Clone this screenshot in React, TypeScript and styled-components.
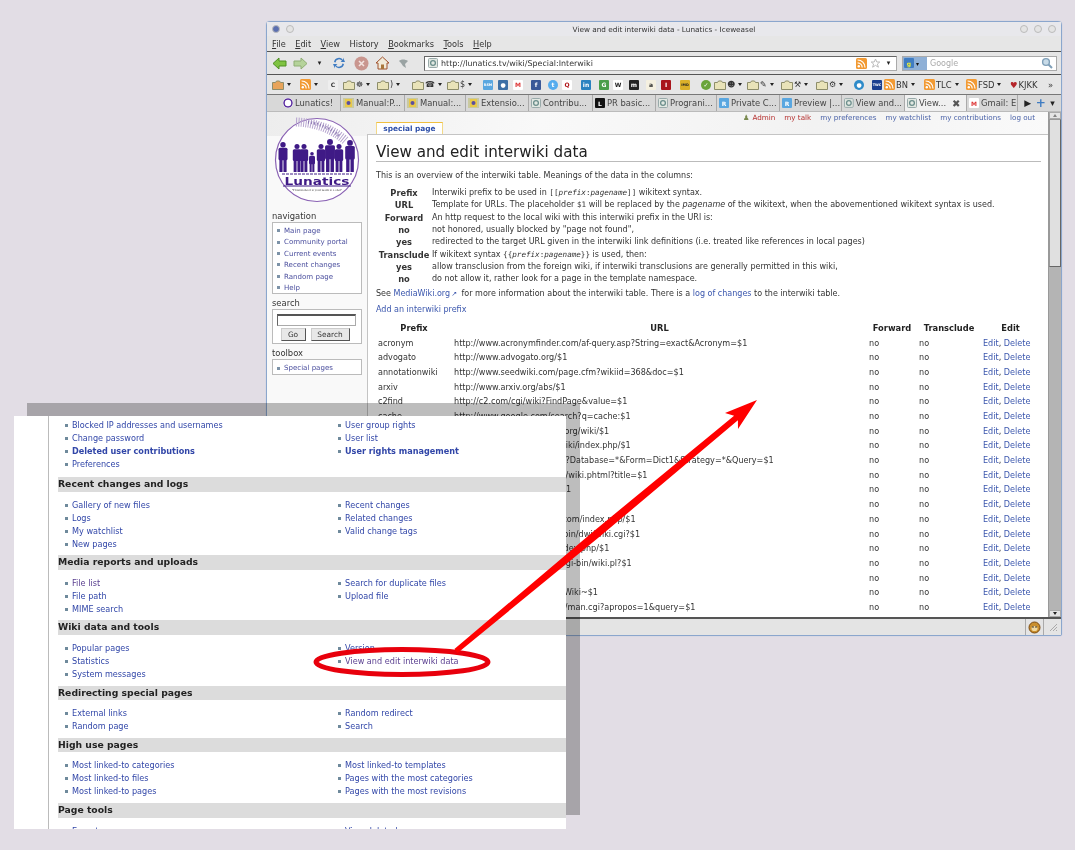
import React from "react";
import styled, { createGlobalStyle } from "styled-components";

const Global = createGlobalStyle`
  html, body { margin: 0; padding: 0; background: #e2dde5; }
  body { font-family: "DejaVu Sans", sans-serif; color: #222; }
`;

const Desktop = styled.div`
  position: relative; width: 1075px; height: 850px; overflow: hidden;
  background: #e2dde5; filter: blur(0.35px);
`;

/* ---------- browser window ---------- */
const Window = styled.div`
  position: absolute; left: 266px; top: 21px; width: 796px; height: 615px;
  box-sizing: border-box; display: flex; flex-direction: column;
  border: 1px solid #8ba6cd; border-radius: 4px 4px 2px 2px; background: #e6e6e6;
  box-shadow: 0 0 1px #9db3d3;
`;
const TitleBar = styled.div`
  height: 14px; flex: none; display: flex; align-items: center; justify-content: space-between; padding: 0 5px;
  font-size: 7.3px; color: #333; background: #e8e8ec;
`;
const TitleDots = styled.div<{ $end?: boolean }>`
  display: flex; gap: 6px; align-items: center; width: 50px; justify-content: ${p => p.$end ? "flex-end" : "flex-start"};
`;
const Dot = styled.span<{ $c?: string }>`
  width: 8px; height: 8px; border-radius: 50%; border: 1px solid #bbb; background: ${p => p.$c || "#e4e4e4"}; box-sizing: border-box;
`;
const MenuBar = styled.div`
  height: 16px; flex: none; display: flex; gap: 9.5px; align-items: center; padding: 0 5px;
  font-size: 8.2px; color: #333; background: #e6e6e6; border-bottom: 1px solid #555; box-sizing: border-box;
  u { text-decoration-thickness: 1px; text-underline-offset: 1px; }
`;
const NavBar = styled.div`
  height: 23px; flex: none; display: flex; align-items: center; padding: 0 3px 0 2px;
  background: #e6e6e6; border-bottom: 1px solid #555; box-sizing: border-box;
`;
const NavSlot = styled.span<{ $w: number }>`
  width: ${p => p.$w}px; flex: none; display: flex; justify-content: center; align-items: center; font-size: 7px; color: #222;
`;
const UrlBox = styled.div`
  flex: none; width: 473px; height: 15px; box-sizing: border-box; margin-left: 9px; display: flex; align-items: center; gap: 3px; padding: 0 3px;
  background: #fff; border: 1px solid #aaa; border-top-color: #666; border-left-color: #666; font-size: 7.95px; color: #333;
`;
const UrlText = styled.span`flex: 1; white-space: nowrap;`;
const SearchBox = styled.div`
  flex: none; width: 155px; height: 15px; box-sizing: border-box; margin-left: 5px; display: flex; align-items: center; padding-right: 3px;
  background: #fff; border: 1px solid #aaa; font-size: 8px; color: #aaa;
`;
const EngineButton = styled.span`
  width: 24px; height: 13px; background: #8fb0d6; display: flex; align-items: center; gap: 2px; padding-left: 1px; box-sizing: border-box; margin-right: 3px; font-size: 6px; color: #111;
`;
const BookmarkBar = styled.div`
  height: 20px; flex: none; display: flex; align-items: center; padding-left: 5px;
  background: #e6e6e6; border-bottom: 1px solid #777; box-sizing: border-box; font-size: 8.4px; color: #333;
`;
const BookmarkSlot = styled.span<{ $w: number }>`
  width: ${p => p.$w}px; flex: none; display: flex; align-items: center; gap: 1px; white-space: nowrap;
`;
const Caret = styled.span<{ $up?: boolean; $flat?: boolean }>`
  width: 0; height: 0; margin-left: ${p => p.$flat ? 0 : 2}px; border-left: 2.5px solid transparent; border-right: 2.5px solid transparent; border-top: 3px solid #222;
  ${p => p.$up ? "transform: rotate(180deg); opacity: .5;" : ""}
`;
const Fav = styled.span<{ $bg: string; $fg?: string; $round?: boolean; $tiny?: boolean }>`
  width: 10px; height: 10px; flex: none; display: inline-flex; align-items: center; justify-content: center; overflow: hidden;
  background: ${p => p.$bg}; color: ${p => p.$fg || "#fff"}; font-size: ${p => p.$tiny ? 3.4 : 6}px; font-weight: bold; border-radius: ${p => p.$round ? "50%" : "1px"};
`;
const FolderGlyph = styled.span`font-size: 8px;`;
const Heart = styled.span`color: #b5252b;`;
const TabBar = styled.div`
  height: 16px; flex: none; display: flex; align-items: stretch; padding-left: 14px; box-sizing: border-box;
  background: #d8d8d8; font-size: 8.4px; color: #444; position: relative;
`;
const Tab = styled.div<{ $active?: boolean; $w: number }>`
  width: ${p => p.$w}px; flex: none; box-sizing: border-box; display: flex; align-items: center; gap: 2px; padding: 0 2px; overflow: hidden; white-space: nowrap;
  border-right: 1px solid #aaa; background: ${p => p.$active ? "#f0f0f0" : "#d8d8d8"};
`;
const TabClose = styled.span`margin-left: 4px; color: #555; font-weight: bold; font-size: 10px;`;
const TabTail = styled.div`
  flex: 1; display: flex; align-items: center; justify-content: space-around; padding: 0 4px; font-size: 9px; color: #222;
`;
const TabPlus = styled.span`color: #3f7cc2; font-weight: bold; font-size: 12px;`;

/* ---------- page ---------- */
const Viewport = styled.div`flex: 1; min-height: 0; display: flex; border-top: 1px solid #bbb;`;
const Page = styled.div`
  flex: 1; min-width: 0; display: flex; overflow: hidden;
  background: linear-gradient(100deg, #ededed 0%, #f9f9f9 35%, #f2f2f2 70%, #fafafa 100%) top / 100% 24px no-repeat, #f9f9f9;
`;
const Sidebar = styled.div`
  width: 100px; flex: none; box-sizing: border-box; padding: 5px 5px 0 5px; font-size: 8px; color: #333;
`;
const LogoWrap = styled.div`height: 86px; display: flex; justify-content: center; margin-bottom: 8px;`;
const PortalTitle = styled.div`font-size: 8.4px; height: 11px; line-height: 11px; color: #333;`;
const PortalBox = styled.div`
  box-sizing: border-box; background: #fff; border: 1px solid #bbb; margin-bottom: 4px; padding: 2px 0 0 4px;
  font-size: 7.05px;
`;
const PortalItem = styled.div`
  height: 11.4px; line-height: 11.4px; color: #4b4f9e; display: flex; align-items: center; gap: 3px;
  &::before { content: ""; width: 3px; height: 3px; background: #7d93a8; flex: none; margin-right: 1px; }
`;
const SearchInput = styled.div`
  height: 12px; margin: 2px 5px 0 0; border: 1px solid #aaa; border-top: 2px solid #555; border-left-color: #666; background: #fff; box-sizing: border-box;
`;
const SearchButtons = styled.div`display: flex; gap: 5px; justify-content: center; margin-top: 2px; padding: 0 8px 2px 0;`;
const SearchBtn = styled.div<{ $w: number }>`
  width: ${p => p.$w}px; height: 13px; box-sizing: border-box; background: #e8e8e8; border: 1px solid #ccc; border-right-color: #555; border-bottom-color: #555;
  font-size: 7.4px; text-align: center; line-height: 11px; color: #333;
`;
const Main = styled.div`flex: 1; min-width: 0; display: flex; flex-direction: column;`;
const PersonalBar = styled.div`
  height: 10px; flex: none; display: flex; justify-content: flex-end; align-items: center; gap: 9px; padding-right: 13px; font-size: 7.2px; color: #4b63a8;
`;
const PersonalItem = styled.span<{ $red?: boolean }>`color: ${p => p.$red ? "#b5302f" : "#4a62a8"}; white-space: nowrap; display: flex; gap: 3px; align-items: center;`;
const UserGlyph = styled.span`color: #7a8a50;`;
const TabRow = styled.div`height: 12px; flex: none; padding-left: 9px; position: relative; z-index: 1;`;
const PageTab = styled.div`
  width: 67px; height: 12px; box-sizing: border-box; background: #fff; border: 1px solid #f3d987; border-bottom: none; border-top-color: #f0c040;
  font-size: 7.4px; font-weight: bold; color: #2b4da8; text-align: center; line-height: 11px;
`;
const Content = styled.div`
  flex: 1; min-height: 0; background: #fff; border: 1px solid #c4c4c4; border-width: 1px 0 0 1px; padding: 0 7px 0 8px; overflow: hidden;
  font-size: 8.02px; color: #333;
`;
const Heading = styled.h1`
  margin: 8px 0 0; height: 18px; font-size: 15.15px; font-weight: normal; line-height: 18px; color: #222; border-bottom: 1px solid #bbb; white-space: nowrap;
`;
const Intro = styled.p`margin: 8px 0 5px; height: 12px; line-height: 12px; white-space: nowrap;`;
const LegendTable = styled.div`display: grid; grid-template-columns: 56px 1fr; grid-auto-rows: 12.35px; line-height: 12.35px; white-space: nowrap;`;
const LegendKey = styled.b`text-align: center; font-weight: bold; color: #333; font-size: 8.3px;`;
const LegendText = styled.span``;
const Mono = styled.code`font-family: "DejaVu Sans Mono", monospace; font-size: 7.6px;`;
const Note = styled.p<{ $top: number }>`margin: ${p => p.$top}px 0 0; height: 12px; line-height: 12px; white-space: nowrap;`;
const Lnk = styled.a`color: #3a56ad;`;
const Ext = styled.span`color: #3a56ad; font-size: 7px; margin: 0 2px 0 1px;`;
const DataTable = styled.table`
  table-layout: fixed; width: 664px; border-collapse: collapse; margin-top: 4.5px; font-size: 8.1px;
  th { font-weight: bold; height: 15px; padding: 0; text-align: center; color: #222; font-size: 8.3px; }
  td { height: 14.7px; padding: 0 0 0 2px; white-space: nowrap; overflow: hidden; color: #333; box-sizing: border-box; }
`;
const Scrollbar = styled.div`
  width: 13px; flex: none; display: flex; flex-direction: column; background: #b4b4b4; border-left: 1px solid #999; box-sizing: border-box;
`;
const ScrollBtn = styled.div`height: 7px; flex: none; background: #e4e4e4; border: 1px solid #aaa; box-sizing: border-box; display: flex; align-items: center; justify-content: center;`;
const ScrollThumb = styled.div`height: 148px; flex: none; background: #e0e0e0; border: 1px solid #999; border-right-color: #666; border-bottom-color: #666; box-sizing: border-box;`;
const ScrollRest = styled.div`flex: 1;`;
const StatusBar = styled.div`
  height: 18px; flex: none; background: #e4e4e4; border-top: 2px solid #555; box-sizing: border-box; display: flex; justify-content: flex-end; align-items: center;
`;
const StatusCell = styled.div`width: 17px; height: 100%; border-left: 1px solid #aaa; display: flex; align-items: center; justify-content: center;`;

/* ---------- overlay panel ---------- */
const PanelShadow = styled.div`
  position: absolute; left: 27px; top: 403px; width: 553px; height: 412px; background: rgba(0,0,0,.26);
`;
const Panel = styled.div`
  position: absolute; left: 14px; top: 416px; width: 552px; height: 413px; background: #fff; overflow: hidden; padding-left: 34px; box-sizing: border-box;
`;
const PanelInner = styled.div`
  display: flow-root; height: 100%; border-left: 1px solid #bbb; padding-left: 9px;
`;
const PanelFlow = styled.div`margin-top: -17.5px;`;
const SectionBar = styled.h4`
  margin: 0; height: 14.6px; line-height: 14px; background: #dcdcdc; font-size: 9.25px; font-weight: 700; color: #222; white-space: nowrap;
`;
const Columns = styled.div<{ $first?: boolean }>`
  display: grid; grid-template-columns: 273px 1fr; padding: 7px 0 ${p => p.$first ? 6.6 : 4.6}px 14px; font-size: 8.14px;
`;
const Col = styled.div`display: flex; flex-direction: column;`;
const Item = styled.div<{ $bold?: boolean; $visited?: boolean }>`
  height: 13px; line-height: 13px; white-space: nowrap; position: relative; color: ${p => p.$visited ? "#5a3f90" : "#3146a8"}; font-weight: ${p => p.$bold ? "bold" : "normal"};
  &::before { content: ""; position: absolute; left: -7px; top: 5px; width: 3px; height: 3px; background: #6f8a9c; }
`;
const Annotation = styled.svg`position: absolute; left: 0; top: 0; pointer-events: none;`;

/* ---------- drawings ---------- */
const Folder = ({ c = "#e9e3b8" }: { c?: string }) => (
  <svg width="12" height="10" viewBox="0 0 12 10"><path d="M.5 2.5h3l1-1.5h3l1 1.5h3v7H.5z" fill={c} stroke="#8d8d6a" /></svg>
);
const Rss = () => (
  <svg width="11" height="11" viewBox="0 0 11 11"><rect width="11" height="11" rx="1.5" fill="#f29a33" /><circle cx="2.8" cy="8.2" r="1.2" fill="#fff" /><path d="M1.6 4.8a4.6 4.6 0 0 1 4.6 4.6M1.6 2a7.4 7.4 0 0 1 7.4 7.4" fill="none" stroke="#fff" strokeWidth="1.2" /></svg>
);
const Gear = () => (
  <svg width="10" height="10" viewBox="0 0 10 10"><rect x=".5" y=".5" width="9" height="9" rx="1" fill="#e2e8e2" stroke="#9aa" /><circle cx="5" cy="5" r="2.4" fill="none" stroke="#6c8e8c" strokeWidth="1.3" /></svg>
);
const MwFav = () => (
  <svg width="11" height="10" viewBox="0 0 11 10"><rect width="11" height="10" fill="#c9c9a0" /><rect x="2" y="1" width="7" height="8" fill="#e9c94a" /><circle cx="5.5" cy="5" r="2" fill="#5b4fa0" /></svg>
);
const NavArrow = ({ c, s, flip }: { c: string; s: string; flip?: boolean }) => (
  <svg width="15" height="13" viewBox="0 0 15 13"><path d={flip ? "M14 6.5 8 1v3H1v5h7v3z" : "M1 6.5 7 1v3h7v5H7v3z"} fill={c} stroke={s} /></svg>
);

const people: [number, number][] = [[9, 25], [23, 27], [30, 27], [38, 35], [47, 27], [56, 22], [65, 27], [76, 23]];
const Logo = () => (
  <svg width="86" height="86" viewBox="0 0 86 86">
    <circle cx="43" cy="43" r="41.5" fill="#fff" stroke="#8a62b4" strokeWidth="1.2" />
    <path d="M22 5Q52 6 72 24" stroke="#b6a4cf" strokeWidth="9" fill="none" strokeDasharray="1 1.4" />
    <path d="M34 5Q56 9 66 20" stroke="#8d79b3" strokeWidth="3" fill="none" strokeDasharray="1 2" />
    <g fill="#3f1a86">
      {people.map(([x, top], i) => {
        const h = 55 - top;
        const w = h * 0.15;
        return (
          <g key={i}>
            <circle cx={x} cy={top + h * 0.09} r={h * 0.09} />
            <rect x={x - w} y={top + h * 0.19} width={w * 2} height={h * 0.42} rx={1.5} />
            <rect x={x - w * 0.8} y={top + h * 0.55} width={w * 0.7} height={h * 0.45} />
            <rect x={x + w * 0.1} y={top + h * 0.55} width={w * 0.7} height={h * 0.45} />
          </g>
        );
      })}
    </g>
    <path d="M8 57H78" stroke="#3f1a86" strokeWidth="1" strokeDasharray="3 1" />
    <text x="43" y="68" textAnchor="middle" fontFamily="DejaVu Sans" fontWeight="bold" fontSize="11" fill="#3f1a86" textLength="65" lengthAdjust="spacingAndGlyphs">Lunatics</text>
    <path d="M9 69H77" stroke="#3f1a86" strokeWidth="1.2" />
    <text x="43" y="73.5" textAnchor="middle" fontFamily="DejaVu Serif" fontSize="2.7" fill="#444">"Troubleshoot is your mark is a shot"</text>
  </svg>
);

/* ---------- data ---------- */
const menus: [string, string][] = [["F", "ile"], ["E", "dit"], ["V", "iew"], ["", "History"], ["B", "ookmarks"], ["T", "ools"], ["H", "elp"]];
const tabs: { t: string; i: "moon" | "mw" | "gear" | "l" | "rsm" | "m"; w: number; active?: boolean }[] = [
  { t: "Lunatics!", i: "moon", w: 60 }, { t: "Manual:P...", i: "mw", w: 64 }, { t: "Manual:...", i: "mw", w: 61 },
  { t: "Extensio...", i: "mw", w: 63 }, { t: "Contribu...", i: "gear", w: 64 }, { t: "PR basic...", i: "l", w: 63 },
  { t: "Prograni...", i: "gear", w: 61 }, { t: "Private C...", i: "rsm", w: 63 }, { t: "Preview |...", i: "rsm", w: 62 },
  { t: "View and...", i: "gear", w: 63 }, { t: "View...", i: "gear", w: 62, active: true }, { t: "Gmail: E", i: "m", w: 51 },
];
type Bm = { w: number; k: string; g?: string; label?: string; bg?: string; fg?: string; round?: boolean; caret?: boolean; tiny?: boolean };
const bookmarks: Bm[] = [
  { w: 28, k: "folder", caret: true, g: "", bg: "#e8a45a" }, { w: 28, k: "rss", caret: true }, { w: 15, k: "fav", label: "C", bg: "#eee", fg: "#333" },
  { w: 34, k: "folder", g: "☸", caret: true }, { w: 35, k: "folder", g: ")", caret: true }, { w: 35, k: "folder", g: "☎", caret: true }, { w: 36, k: "folder", g: "$", caret: true },
  { w: 15, k: "fav", label: "RSM", bg: "#5aa7e0", tiny: true }, { w: 15, k: "fav", label: "●", bg: "#3c6fa5" }, { w: 18, k: "fav", label: "M", bg: "#fff", fg: "#d33" },
  { w: 17, k: "fav", label: "f", bg: "#3b5998" }, { w: 14, k: "fav", label: "t", bg: "#55acee", round: true }, { w: 19, k: "fav", label: "Q", bg: "#fff", fg: "#b01116" },
  { w: 18, k: "fav", label: "in", bg: "#2a82c0" }, { w: 14, k: "fav", label: "G", bg: "#4a9e4a" }, { w: 16, k: "fav", label: "W", bg: "#fff", fg: "#222" },
  { w: 17, k: "fav", label: "m", bg: "#222" }, { w: 15, k: "fav", label: "a", bg: "#f5f0e0", fg: "#222" }, { w: 19, k: "fav", label: "I", bg: "#a9161b" },
  { w: 21, k: "fav", label: "IMD", bg: "#dbb02a", fg: "#222", tiny: true }, { w: 13, k: "fav", label: "✓", bg: "#6aa53a", round: true },
  { w: 33, k: "folder", g: "☻", caret: true }, { w: 34, k: "folder", g: "✎", caret: true }, { w: 35, k: "folder", g: "⚒", caret: true }, { w: 38, k: "folder", g: "⚙", caret: true },
  { w: 18, k: "fav", label: "●", bg: "#2e8bc9", round: true }, { w: 12, k: "fav", label: "TWC", bg: "#1b3f8f", tiny: true },
  { w: 40, k: "rss", label: "BN", caret: true }, { w: 42, k: "rss", label: "TLC", caret: true }, { w: 44, k: "rss", label: "FSD", caret: true },
  { w: 38, k: "heart", label: "KJKK" }, { w: 8, k: "more", label: "»" },
];
const rows: [string, string][] = [
  ["acronym", "http://www.acronymfinder.com/af-query.asp?String=exact&Acronym=$1"],
  ["advogato", "http://www.advogato.org/$1"],
  ["annotationwiki", "http://www.seedwiki.com/page.cfm?wikiid=368&doc=$1"],
  ["arxiv", "http://www.arxiv.org/abs/$1"],
  ["c2find", "http://c2.com/cgi/wiki?FindPage&value=$1"],
  ["cache", "http://www.google.com/search?q=cache:$1"],
  ["commons", "http://commons.wikimedia.org/wiki/$1"],
  ["corpknowpedia", "http://corpknowpedia.org/wiki/index.php/$1"],
  ["dictionary", "http://www.dict.org/bin/Dict?Database=*&Form=Dict1&Strategy=*&Query=$1"],
  ["disinfopedia", "http://www.disinfopedia.org/wiki.phtml?title=$1"],
  ["docbook", "http://www.docbook.org/y/$1"],
  ["doi", "http://dx.doi.org/$1"],
  ["drumcorpswiki", "http://www.drumcorpswiki.com/index.php/$1"],
  ["dwjwiki", "http://www.suberic.net/cgi-bin/dwj/wiki.cgi?$1"],
  ["elibre", "http://enciclopedia.us.es/index.php/$1"],
  ["emacswiki", "http://www.emacswiki.org/cgi-bin/wiki.pl?$1"],
  ["foldoc", "http://foldoc.org/?$1"],
  ["foxwiki", "http://fox.wikis.com/wc.dll?Wiki~$1"],
  ["freebsdman", "http://www.FreeBSD.org/cgi/man.cgi?apropos=1&query=$1"],
];
type It = { t: string; b?: boolean; v?: boolean };
const sections: { h: string | null; l: It[]; r: It[] }[] = [
  { h: null, l: [{ t: "Block user" }, { t: "Blocked IP addresses and usernames" }, { t: "Change password" }, { t: "Deleted user contributions", b: true }, { t: "Preferences" }],
    r: [{ t: "Active users list" }, { t: "User group rights" }, { t: "User list" }, { t: "User rights management", b: true }] },
  { h: "Recent changes and logs", l: [{ t: "Gallery of new files" }, { t: "Logs" }, { t: "My watchlist" }, { t: "New pages" }], r: [{ t: "Recent changes" }, { t: "Related changes" }, { t: "Valid change tags" }] },
  { h: "Media reports and uploads", l: [{ t: "File list", v: true }, { t: "File path" }, { t: "MIME search" }], r: [{ t: "Search for duplicate files" }, { t: "Upload file" }] },
  { h: "Wiki data and tools", l: [{ t: "Popular pages" }, { t: "Statistics" }, { t: "System messages" }], r: [{ t: "Version" }, { t: "View and edit interwiki data", v: true }] },
  { h: "Redirecting special pages", l: [{ t: "External links" }, { t: "Random page" }], r: [{ t: "Random redirect" }, { t: "Search" }] },
  { h: "High use pages", l: [{ t: "Most linked-to categories" }, { t: "Most linked-to files" }, { t: "Most linked-to pages" }], r: [{ t: "Most linked-to templates" }, { t: "Pages with the most categories" }, { t: "Pages with the most revisions" }] },
  { h: "Page tools", l: [{ t: "Export" }], r: [{ t: "View deleted pages" }] },
];

const TabIcon = ({ i }: { i: string }) => {
  if (i === "moon") return <Fav $bg="#fff" $round><svg width="10" height="10" viewBox="0 0 10 10"><circle cx="5" cy="5" r="4" fill="none" stroke="#5a2ca0" strokeWidth="1.6" /></svg></Fav>;
  if (i === "mw") return <MwFav />;
  if (i === "l") return <Fav $bg="#111">L</Fav>;
  if (i === "rsm") return <Fav $bg="#5aa7e0">R</Fav>;
  if (i === "m") return <Fav $bg="#fff" $fg="#d33">M</Fav>;
  return <Gear />;
};

export default function App() {
  return (
    <Desktop>
      <Global />
      <Window>
        <TitleBar>
          <TitleDots><Dot $c="#5b6fb0" /><Dot /></TitleDots>
          <span>View and edit interwiki data - Lunatics - Iceweasel</span>
          <TitleDots $end><Dot /><Dot /><Dot /></TitleDots>
        </TitleBar>
        <MenuBar>{menus.map(([a, b]) => <span key={b}><u>{a}</u>{b}</span>)}</MenuBar>
        <NavBar>
          <NavSlot $w={21}><NavArrow c="#7fc341" s="#4e8f22" /></NavSlot>
          <NavSlot $w={21}><NavArrow c="#b5d39a" s="#8fae74" flip /></NavSlot>
          <NavSlot $w={17}>▾</NavSlot>
          <NavSlot $w={21}>
            <svg width="14" height="14" viewBox="0 0 14 14"><path d="M2 6a5 5 0 0 1 9-2V1.5L13 6H8.5l1.5-1.2A3.6 3.6 0 0 0 3.5 6.5zM12 8a5 5 0 0 1-9 2v2.5L1 8h4.5L4 9.2a3.6 3.6 0 0 0 6.5-1.7z" fill="#3f7cc2" /></svg>
          </NavSlot>
          <NavSlot $w={24}>
            <svg width="15" height="15" viewBox="0 0 15 15"><circle cx="7.5" cy="7.5" r="7" fill="#c9968f" /><path d="M5 5l5 5M10 5l-5 5" stroke="#f3e3e0" strokeWidth="1.6" /></svg>
          </NavSlot>
          <NavSlot $w={19}>
            <svg width="15" height="14" viewBox="0 0 15 14"><path d="M7.5 1 1 7h2v6h9V7h2z" fill="#f1ead8" stroke="#a0522d" /><rect x="6" y="8.5" width="3" height="4.5" fill="#a9763a" /></svg>
          </NavSlot>
          <NavSlot $w={23}>
            <svg width="11" height="11" viewBox="0 0 11 11"><path d="M1 3c2-2 6-2 9 0l-3 3 1 4-3-2-2-3z" fill="#9aa3a3" /></svg>
          </NavSlot>
          <UrlBox>
            <Gear />
            <UrlText>http://lunatics.tv/wiki/Special:Interwiki</UrlText>
            <Rss /><svg width="11" height="11" viewBox="0 0 11 11"><path d="M5.5 1l1.3 3h3l-2.4 2 1 3.2-2.9-1.8-2.9 1.8 1-3.2L1.2 4h3z" fill="#fff" stroke="#bbb" /></svg>
            <NavSlot $w={9}>▾</NavSlot>
          </UrlBox>
          <SearchBox>
            <EngineButton><Fav $bg="#3f7cc2" $fg="#ee3">g</Fav>▾</EngineButton>
            <UrlText>Google</UrlText>
            <svg width="12" height="12" viewBox="0 0 12 12"><circle cx="5" cy="5" r="3.4" fill="#c8dbe8" stroke="#7f9fb8" strokeWidth="1.4" /><path d="M7.5 7.5 11 11" stroke="#7f9fb8" strokeWidth="2" /></svg>
          </SearchBox>
        </NavBar>
        <BookmarkBar>
          {bookmarks.map((b, i) => (
            <BookmarkSlot key={i} $w={b.w}>
              {b.k === "folder" && <Folder c={b.bg || undefined} />}
              {b.k === "folder" && b.g && <FolderGlyph>{b.g}</FolderGlyph>}
              {b.k === "rss" && <Rss />}
              {b.k === "fav" && <Fav $bg={b.bg!} $fg={b.fg} $round={b.round} $tiny={b.tiny}>{b.label}</Fav>}
              {b.k === "heart" && <Heart>♥</Heart>}
              {b.k !== "fav" && b.k !== "folder" && b.label && <span>{b.label}</span>}
              {b.caret && <Caret />}
            </BookmarkSlot>
          ))}
        </BookmarkBar>
        <TabBar>
          {tabs.map((t, i) => (
            <Tab key={i} $w={t.w} $active={t.active}>
              <TabIcon i={t.i} />{t.t}
              {t.active && <TabClose>✖</TabClose>}
            </Tab>
          ))}
          <TabTail><span>▶</span><TabPlus>+</TabPlus><span>▾</span></TabTail>
        </TabBar>
        <Viewport>
          <Page>
            <Sidebar>
              <LogoWrap><Logo /></LogoWrap>
              <PortalTitle>navigation</PortalTitle>
              <PortalBox>
                {["Main page", "Community portal", "Current events", "Recent changes", "Random page", "Help"].map(t => <PortalItem key={t}>{t}</PortalItem>)}
              </PortalBox>
              <PortalTitle>search</PortalTitle>
              <PortalBox>
                <SearchInput />
                <SearchButtons><SearchBtn $w={25}>Go</SearchBtn><SearchBtn $w={39}>Search</SearchBtn></SearchButtons>
              </PortalBox>
              <PortalTitle>toolbox</PortalTitle>
              <PortalBox><PortalItem>Special pages</PortalItem></PortalBox>
            </Sidebar>
            <Main>
              <PersonalBar>
                <PersonalItem $red><UserGlyph>♟</UserGlyph>Admin</PersonalItem>
                <PersonalItem $red>my talk</PersonalItem>
                {["my preferences", "my watchlist", "my contributions", "log out"].map(t => <PersonalItem key={t}>{t}</PersonalItem>)}
              </PersonalBar>
              <TabRow><PageTab>special page</PageTab></TabRow>
              <Content>
                <Heading>View and edit interwiki data</Heading>
                <Intro>This is an overview of the interwiki table. Meanings of the data in the columns:</Intro>
                <LegendTable>
                  <LegendKey>Prefix</LegendKey><LegendText>Interwiki prefix to be used in <Mono>[[<i>prefix</i>:<i>pagename</i>]]</Mono> wikitext syntax.</LegendText>
                  <LegendKey>URL</LegendKey><LegendText>Template for URLs. The placeholder <Mono>$1</Mono> will be replaced by the <i>pagename</i> of the wikitext, when the abovementioned wikitext syntax is used.</LegendText>
                  <LegendKey>Forward</LegendKey><LegendText>An http request to the local wiki with this interwiki prefix in the URl is:</LegendText>
                  <LegendKey>no</LegendKey><LegendText>not honored, usually blocked by "page not found",</LegendText>
                  <LegendKey>yes</LegendKey><LegendText>redirected to the target URL given in the interwiki link definitions (i.e. treated like references in local pages)</LegendText>
                  <LegendKey>Transclude</LegendKey><LegendText>If wikitext syntax <Mono>{"{{"}<i>prefix</i>:<i>pagename</i>{"}}"}</Mono> is used, then:</LegendText>
                  <LegendKey>yes</LegendKey><LegendText>allow transclusion from the foreign wiki, if interwiki transclusions are generally permitted in this wiki,</LegendText>
                  <LegendKey>no</LegendKey><LegendText>do not allow it, rather look for a page in the template namespace.</LegendText>
                </LegendTable>
                <Note $top={2}>See <Lnk>MediaWiki.org</Lnk><Ext>↗</Ext> for more information about the interwiki table. There is a <Lnk>log of changes</Lnk> to the interwiki table.</Note>
                <Note $top={4}><Lnk>Add an interwiki prefix</Lnk></Note>
                <DataTable>
                  <colgroup><col width="76" /><col width="415" /><col width="50" /><col width="64" /><col width="59" /></colgroup>
                  <thead><tr><th>Prefix</th><th>URL</th><th>Forward</th><th>Transclude</th><th>Edit</th></tr></thead>
                  <tbody>
                    {rows.map(([p, u]) => (
                      <tr key={p}><td>{p}</td><td>{u}</td><td>no</td><td>no</td><td><Lnk>Edit</Lnk>, <Lnk>Delete</Lnk></td></tr>
                    ))}
                  </tbody>
                </DataTable>
              </Content>
            </Main>
          </Page>
          <Scrollbar>
            <ScrollBtn><Caret $up $flat /></ScrollBtn>
            <ScrollThumb />
            <ScrollRest />
            <ScrollBtn><Caret $flat /></ScrollBtn>
          </Scrollbar>
        </Viewport>
        <StatusBar>
          <StatusCell>
            <svg width="13" height="13" viewBox="0 0 13 13"><circle cx="6.5" cy="6.5" r="5.5" fill="#c98f2e" stroke="#7a4a10" /><ellipse cx="6.5" cy="7.5" rx="3" ry="2.6" fill="#f0d9a0" /><circle cx="5" cy="6" r=".8" fill="#222" /><circle cx="8" cy="6" r=".8" fill="#222" /></svg>
          </StatusCell>
          <StatusCell>
            <svg width="10" height="10" viewBox="0 0 10 10"><path d="M9 2 2 9M9 5 5 9M9 8 8 9" stroke="#aaa" /></svg>
          </StatusCell>
        </StatusBar>
      </Window>

      <PanelShadow />
      <Panel>
        <PanelInner>
          <PanelFlow>
            {sections.map((s, i) => (
              <React.Fragment key={i}>
                {s.h && <SectionBar>{s.h}</SectionBar>}
                <Columns $first={!s.h}>
                  <Col>{s.l.map(it => <Item key={it.t} $bold={it.b} $visited={it.v}>{it.t}</Item>)}</Col>
                  <Col>{s.r.map(it => <Item key={it.t} $bold={it.b} $visited={it.v}>{it.t}</Item>)}</Col>
                </Columns>
              </React.Fragment>
            ))}
          </PanelFlow>
        </PanelInner>
      </Panel>

      <Annotation width="1075" height="850" viewBox="0 0 1075 850">
        <ellipse cx="402" cy="662" rx="86" ry="12.5" fill="none" stroke="#e8000c" strokeWidth="5" />
        <polygon points="454.4,649.1 593.4,531.4 734.1,415.7 725,413 757,400 738,429 737.9,420.3 598.6,537.6 457.6,652.9" fill="#f00" />
      </Annotation>
    </Desktop>
  );
}
